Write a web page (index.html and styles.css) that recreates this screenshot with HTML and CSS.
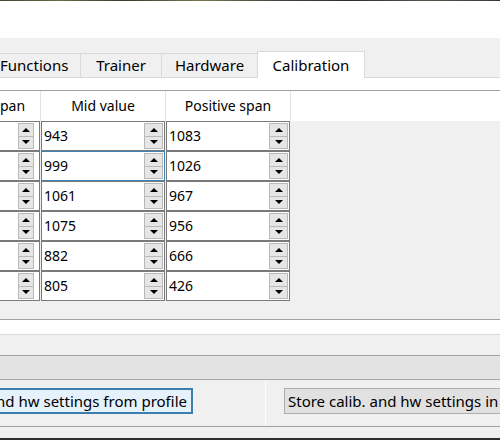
FILE: index.html
```html
<!DOCTYPE html>
<html>
<head>
<meta charset="utf-8">
<link rel="stylesheet" href="styles.css">
</head>
<body>
<div class="window">
  <div class="topline"></div>
  <div class="titlearea"></div>
  <div class="tabbar">
    <div class="tab t-functions">Functions</div>
    <div class="tab t-trainer">Trainer</div>
    <div class="tab t-hardware">Hardware</div>
    <div class="tab t-calib active">Calibration</div>
  </div>
  <div class="pane">
    <div class="table">
      <div class="hrow">
        <div class="hcell">Negative span</div>
        <div class="hcell">Mid value</div>
        <div class="hcell">Positive span</div>
        <div class="hfill"></div>
      </div>
      <div class="body">
        <div class="row">
          <div class="cell c1"><div class="spin"><span class="val">1010</span><span class="btns"><i class="up"></i><i class="dn"></i></span></div></div>
          <div class="cell"><div class="spin"><span class="val">943</span><span class="btns"><i class="up"></i><i class="dn"></i></span></div></div>
          <div class="cell"><div class="spin"><span class="val">1083</span><span class="btns"><i class="up"></i><i class="dn"></i></span></div></div>
        </div>
        <div class="row">
          <div class="cell c1"><div class="spin"><span class="val">1020</span><span class="btns"><i class="up"></i><i class="dn"></i></span></div></div>
          <div class="cell"><div class="spin focus"><span class="val">999</span><span class="btns"><i class="up"></i><i class="dn"></i></span></div></div>
          <div class="cell"><div class="spin"><span class="val">1026</span><span class="btns"><i class="up"></i><i class="dn"></i></span></div></div>
        </div>
        <div class="row">
          <div class="cell c1"><div class="spin"><span class="val">1000</span><span class="btns"><i class="up"></i><i class="dn"></i></span></div></div>
          <div class="cell"><div class="spin"><span class="val">1061</span><span class="btns"><i class="up"></i><i class="dn"></i></span></div></div>
          <div class="cell"><div class="spin"><span class="val">967</span><span class="btns"><i class="up"></i><i class="dn"></i></span></div></div>
        </div>
        <div class="row">
          <div class="cell c1"><div class="spin"><span class="val">1000</span><span class="btns"><i class="up"></i><i class="dn"></i></span></div></div>
          <div class="cell"><div class="spin"><span class="val">1075</span><span class="btns"><i class="up"></i><i class="dn"></i></span></div></div>
          <div class="cell"><div class="spin"><span class="val">956</span><span class="btns"><i class="up"></i><i class="dn"></i></span></div></div>
        </div>
        <div class="row">
          <div class="cell c1"><div class="spin"><span class="val">1000</span><span class="btns"><i class="up"></i><i class="dn"></i></span></div></div>
          <div class="cell"><div class="spin"><span class="val">882</span><span class="btns"><i class="up"></i><i class="dn"></i></span></div></div>
          <div class="cell"><div class="spin"><span class="val">666</span><span class="btns"><i class="up"></i><i class="dn"></i></span></div></div>
        </div>
        <div class="row">
          <div class="cell c1"><div class="spin"><span class="val">1000</span><span class="btns"><i class="up"></i><i class="dn"></i></span></div></div>
          <div class="cell"><div class="spin"><span class="val">805</span><span class="btns"><i class="up"></i><i class="dn"></i></span></div></div>
          <div class="cell"><div class="spin"><span class="val">426</span><span class="btns"><i class="up"></i><i class="dn"></i></span></div></div>
        </div>
      </div>
    </div>
  </div>
  <div class="gap"></div>
  <div class="band"></div>
  <div class="actions">
    <div class="left-pane"><button class="btn primary">Load calib. and hw settings from profile</button></div>
    <div class="right-pane"><button class="btn">Store calib. and hw settings in profile</button></div>
  </div>
  <div class="status"></div>
  <div class="bottomline"></div>
</div>
</body>
</html>
```
FILE: styles.css
```css
html, body {
  margin: 0;
  padding: 0;
}
body {
  width: 500px;
  height: 440px;
  overflow: hidden;
  background: #f0f0f0;
  font-family: "Noto Sans", "Open Sans", sans-serif;
  color: #000;
}
.window {
  width: 500px;
  height: 440px;
  display: flex;
  flex-direction: column;
  overflow: hidden;
}
.topline {
  height: 1px;
  flex: none;
  background: linear-gradient(90deg, #4a4632 0%, #6b6845 12%, #3a3a30 25%, #7a7650 40%, #454440 55%, #2e2e2e 70%, #55554a 85%, #3a3a3a 100%);
}
.titlearea {
  height: 37px;
  flex: none;
  background: #fff;
}
.tabbar {
  height: 39px;
  flex: none;
  background: #f0f0f0;
  display: flex;
  align-items: flex-end;
  border-bottom: 1px solid #d9d9d9;
  box-sizing: border-box;
  height: 40px;
}
.tab {
  height: 24px;
  box-sizing: border-box;
  border: 1px solid #d9d9d9;
  border-bottom: none;
  border-left: none;
  font-size: 15px;
  line-height: 22px;
  text-align: center;
  background: #f0f0f0;
  flex: none;
}
.t-functions { width: 81px; margin-left: 0; text-align: left; padding-left: 0; }
.t-trainer { width: 81px; }
.t-hardware { width: 96px; }
.t-calib { width: 108px; }
.tab.active {
  background: #fff;
  height: 27px;
  margin-bottom: -1px;
  border-left: 1px solid #d9d9d9;
  margin-left: -1px;
  line-height: 26px;
}
.pane {
  height: 257px;
  flex: none;
  background: #fff;
  border-bottom: 1px solid #dadada;
  padding-top: 12px;
  box-sizing: border-box;
  overflow: hidden;
}
.table {
  border-top: 1px solid #a0a0a0;
  border-bottom: 1px solid #a0a0a0;
  background: #f0f0f0;
  height: 230px;
  box-sizing: border-box;
  margin-left: -84px;
}
.hrow {
  display: flex;
  height: 30px;
  background: #fff;
}
.hcell {
  width: 125px;
  flex: none;
  box-sizing: border-box;
  border-right: 1px solid #e5e5e5;
  font-size: 14px;
  line-height: 30px;
  text-align: center;
  white-space: nowrap;
}
.hfill { flex: 1; }
.row {
  display: flex;
  height: 30px;
}
.cell {
  width: 125px;
  flex: none;
  box-sizing: border-box;
  padding-right: 1px;
}
.spin {
  height: 30px;
  box-sizing: border-box;
  border: 1px solid #7a7a7a;
  background: #fff;
  display: flex;
  align-items: stretch;
}
.spin.focus {
  border-color: #3c84b8;
}
.val {
  flex: 1;
  font-size: 14px;
  line-height: 28px;
  padding-left: 2px;
}
.btns {
  width: 19px;
  display: flex;
  flex-direction: column;
  padding: 1px 1px 1px 0;
}
.c1 .btns { margin-right: 4px; width: 16px; }
.btns i {
  flex: 1;
  border: 1px solid #b9b9b9;
  background: #e6e6e6;
  position: relative;
  display: flex;
  align-items: center;
  justify-content: center;
}
.btns i + i { border-top: none; }
.btns i::after {
  content: "";
  width: 0;
  height: 0;
  border-left: 4px solid transparent;
  border-right: 4px solid transparent;
}
.btns i.up::after { border-bottom: 4px solid #000; }
.btns i.dn::after { border-top: 4px solid #000; }
.gap {
  height: 21px;
  flex: none;
  background: #f0f0f0;
  border-bottom: 1px solid #a0a0a0;
  box-sizing: border-box;
}
.band {
  height: 24px;
  flex: none;
  background: #e3e3e3;
  border-bottom: 1px solid #a8a8a8;
  box-sizing: border-box;
}
.actions {
  height: 47px;
  flex: none;
  display: flex;
  border-bottom: 1px solid #a0a0a0;
  box-sizing: border-box;
}
.left-pane {
  width: 266px;
  flex: none;
  display: flex;
  justify-content: flex-end;
  align-items: flex-start;
  padding: 8px 72px 0 0;
  box-sizing: border-box;
  border-right: 1px solid #fcfcfc;
}
.right-pane {
  flex: 1;
  display: flex;
  padding: 8px 0 0 18px;
  overflow: hidden;
}
.btn {
  flex: none;
  white-space: nowrap;
  height: 26px;
  font-family: "Noto Sans", "Open Sans", sans-serif;
  font-size: 15px;
  padding: 0 4px 0 3px;
  margin: 0;
  background: #e1e1e1;
  border: 1px solid #adadad;
  color: #000;
  line-height: 22px;
}
.btn.primary {
  background: #e5f1fb;
  border: 2px solid #3a7fae;
}
.status {
  flex: 1;
  background: #f0f0f0;
}
.bottomline {
  height: 2px;
  flex: none;
  background: #2e2e2e;
}
```
